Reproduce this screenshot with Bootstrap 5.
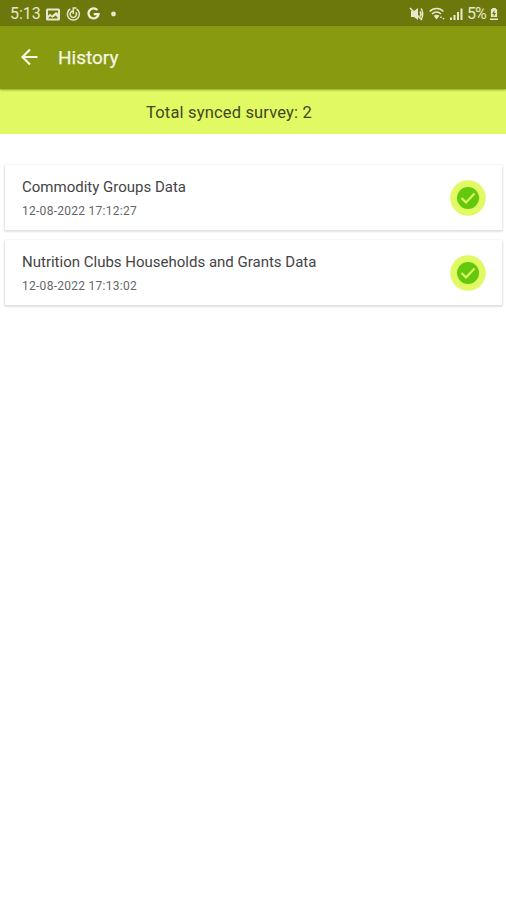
<!DOCTYPE html>
<html lang="en">
<head>
<meta charset="utf-8">
<meta name="viewport" content="width=device-width, initial-scale=1">
<title>History</title>
<link href="https://cdn.jsdelivr.net/npm/bootstrap@5.3.0/dist/css/bootstrap.min.css" rel="stylesheet">
<style>
body { font-family: Roboto, "Noto Sans", sans-serif; color: #3c3c3c; }
svg { display: block; flex: none; }
.status-bar { height: 26px; background: #6c780b; color: #e6e9cb; padding: 2px 8px 0 10px; font-size: 16px; line-height: 24px; }
.status-clock { width: 36px; white-space: nowrap; font-size: 16px; }
.status-level { font-size: 16px; letter-spacing: -.8px; }
.app-bar { height: 63px; background: #879a10; padding: 2px 19px 0 20px; gap: 18px; box-shadow: 0 1px 2px rgba(70,85,0,.55); position: relative; }
.app-bar svg { margin-bottom: 3px; }
.app-title { font-size: 19px; font-weight: 400; color: #f4f6e4; -webkit-text-stroke: .25px #f4f6e4; }
.total-banner { height: 45px; margin-bottom: 31px; padding: 4px 48px 0 0; background: #e1f963; color: #42481f; font-size: 16.5px; letter-spacing: .17px; }
.survey-list { padding: 0 4px 0 5px; gap: 10px; }
.survey-card { height: 65px; border: 0; border-radius: 1px; padding: 0 16px 0 17px; box-shadow: 0 1px 2px 1px rgba(0,0,0,.12); }
.survey-name { font-size: 15px; line-height: 20px; color: #444; }
.survey-time { font-size: 12px; line-height: 16px; margin-top: 6px; letter-spacing: .27px; color: #666; }
</style>
</head>
<body class="bg-white min-vh-100">
<div class="status-bar d-flex align-items-center justify-content-between">
  <div class="d-flex align-items-center">
    <span class="status-clock">5:13</span>
    <svg width="14" height="13" viewBox="0 0 14 13"><path fill="#e6e9cb" fill-rule="evenodd" d="M1.500 .5h11A1.500 1.500 0 0 1 14 2v9A1.500 1.500 0 0 1 12.500 12.500h-11A1.500 1.500 0 0 1 0 11V2A1.500 1.500 0 0 1 1.500 .5zM2 2.500v5l2-1.700 2 1.700 4-3.500 2 1.500v-3zM2 10.500h10L9.800 7.500 6.500 9.700 4.200 8.200z"/></svg>
    <svg class="ms-1" width="19" height="14" viewBox="0 0 19 14" fill="none" stroke="#e6e9cb" stroke-width="1.500"><path d="M6.200 2A6 6 0 1 0 12.500 2M9.300 4a3.200 3.200 0 1 0 2.500 1.200M9.300 7V1h3"/></svg>
    <svg class="ms-1" width="13" height="14" viewBox="0 0 13 14" fill="none" stroke="#f0f1df" stroke-width="2.300"><path d="M10.300 3.100A5 5 0 1 0 11.500 7.200H6.700"/></svg>
    <svg width="24" height="14" viewBox="0 0 24 14"><circle cx="13.500" cy="7" r="2.400" fill="#e6e9cb"/></svg>
  </div>
  <div class="d-flex align-items-center">
    <svg width="16" height="14" viewBox="0 0 16 14"><path fill="#e6e9cb" d="M2 4h3l4-3v12L5 10H2z"/><path fill="none" stroke="#e6e9cb" stroke-width="1.500" d="M1 1l12 12M11 4.500c1.200 1.500 1.200 3.500 0 5M12 1.500c2.300 2 2.300 8.500 0 11"/></svg>
    <svg class="ms-1" width="17" height="14" viewBox="0 0 17 14" fill="none" stroke="#e6e9cb" stroke-width="1.500"><path d="M.7 4.600C4.500.5 11 .5 14.500 4.600M3 7c2.700-2.600 6.500-2.600 9 0"/><path fill="#e6e9cb" stroke="none" d="M4.700 8.800c1.700-1.500 4-1.500 5.700 0L7.600 12.500zM12 9l1.300 1.800h-2.600zM14.500 12.800l1.200-1.800h-2.400z"/></svg>
    <svg class="ms-1" width="13" height="14" viewBox="0 0 13 14"><path fill="#e6e9cb" d="M0 10.500h2V13H0zM3.500 8h2v5h-2zM7 5h2v8H7zM10.500 1.500h2V13h-2z"/></svg>
    <span class="status-level ms-1">5%</span>
    <svg class="ms-1" width="8" height="14" viewBox="0 0 9 14" preserveAspectRatio="none"><path fill="#e6e9cb" d="M2.500 1h4v1.200H8V10H1V2.200h1.500zM0 11.500h9V13H0z"/><path fill="#6c780b" d="M5 3L2.300 7h1.800v2.800L6.800 6H5z"/></svg>
  </div>
</div>
<header class="app-bar d-flex align-items-center">
  <svg width="20" height="20" viewBox="0 0 20 20" fill="none" stroke="#f4f6e4" stroke-width="2.200"><path d="M17.500 10H2.500M10 2.500L2.500 10l7.500 7.500"/></svg>
  <h1 class="app-title mb-0">History</h1>
</header>
<div class="total-banner d-flex align-items-center justify-content-center">Total synced survey: 2</div>
<main class="survey-list d-flex flex-column">
  <article class="survey-card card flex-row align-items-center justify-content-between">
    <div><div class="survey-name">Commodity Groups Data</div><div class="survey-time">12-08-2022 17:12:27</div></div>
    <svg width="36" height="36" viewBox="0 0 36 36"><circle cx="18" cy="18" r="17.800" fill="#e1f963"/><circle cx="18" cy="18" r="11" fill="#64c80d"/><path fill="none" stroke="#e1f963" stroke-width="2.200" d="M11.500 18l4.500 4.500 8.500-9"/></svg>
  </article>
  <article class="survey-card card flex-row align-items-center justify-content-between">
    <div><div class="survey-name">Nutrition Clubs Households and Grants Data</div><div class="survey-time">12-08-2022 17:13:02</div></div>
    <svg width="36" height="36" viewBox="0 0 36 36"><circle cx="18" cy="18" r="17.800" fill="#e1f963"/><circle cx="18" cy="18" r="11" fill="#64c80d"/><path fill="none" stroke="#e1f963" stroke-width="2.200" d="M11.500 18l4.500 4.500 8.500-9"/></svg>
  </article>
</main>
<script src="https://cdn.jsdelivr.net/npm/bootstrap@5.3.0/dist/js/bootstrap.bundle.min.js"></script>
</body>
</html>
